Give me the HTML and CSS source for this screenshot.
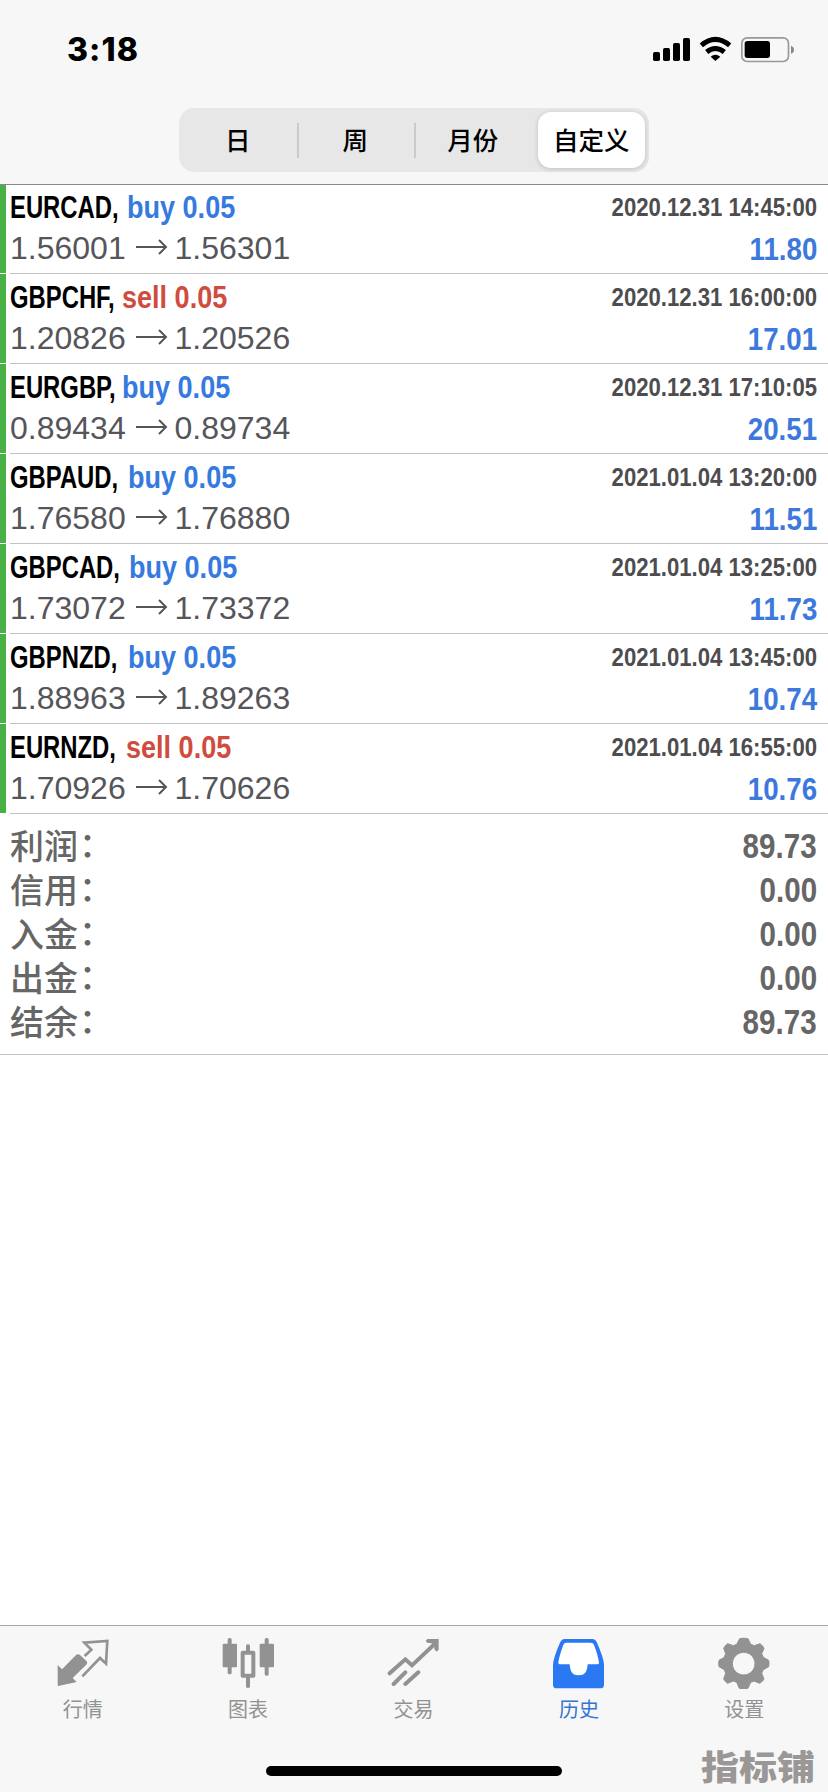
FILE: index.html
```html
<!DOCTYPE html>
<html lang="zh-CN">
<head>
<meta charset="utf-8">
<title>历史</title>
<link rel="stylesheet" href="styles.css">
</head>
<body>
<div class="screen">
  <header class="header">
    <div class="status">
      <span class="clock">3:18</span>
      <svg class="status-icons" viewBox="714 108 432 81" aria-hidden="true">
        <rect x="717" y="156" width="21" height="27" rx="5"/>
        <rect x="747" y="144" width="21" height="39" rx="5"/>
        <rect x="777" y="129" width="21" height="54" rx="5"/>
        <rect x="807" y="114" width="21" height="69" rx="5"/>
        <path d="M862 136Q904 100 947 136M878 156Q904 135 931 156" fill="none" stroke="#000" stroke-width="15"/>
        <path d="M890 170Q904 158 919 170L904 183Z"/>
        <rect x="983.500" y="113.500" width="140" height="71" rx="16" fill="none" stroke="#999" stroke-width="5"/>
        <rect x="992" y="123" width="76" height="51" rx="8"/>
        <path d="M1131 137Q1140 140 1140 149Q1140 158 1131 161Z" fill="#888"/>
      </svg>
    </div>
    <nav class="segments">
      <span class="segment">日</span>
      <span class="segment divided">周</span>
      <span class="segment divided">月份</span>
      <span class="segment selected"><span class="pill">自定义</span></span>
    </nav>
  </header>

  <main class="content">
    <section class="deals">
      <article class="deal">
        <div class="line top"><span class="symbol" style="width:117px">EURCAD,</span><span class="side buy">buy 0.05</span><time>2020.12.31 14:45:00</time></div>
        <div class="line bottom"><span class="price">1.56001</span><svg class="arrow" viewBox="0 0 32 16"><path d="M0 8H30M23 1L30 8L23 15"/></svg><span class="price">1.56301</span><span class="profit">11.80</span></div>
      </article>
      <article class="deal">
        <div class="line top"><span class="symbol" style="width:112px">GBPCHF,</span><span class="side sell">sell 0.05</span><time>2020.12.31 16:00:00</time></div>
        <div class="line bottom"><span class="price">1.20826</span><svg class="arrow" viewBox="0 0 32 16"><path d="M0 8H30M23 1L30 8L23 15"/></svg><span class="price">1.20526</span><span class="profit">17.01</span></div>
      </article>
      <article class="deal">
        <div class="line top"><span class="symbol" style="width:112px">EURGBP,</span><span class="side buy">buy 0.05</span><time>2020.12.31 17:10:05</time></div>
        <div class="line bottom"><span class="price">0.89434</span><svg class="arrow" viewBox="0 0 32 16"><path d="M0 8H30M23 1L30 8L23 15"/></svg><span class="price">0.89734</span><span class="profit">20.51</span></div>
      </article>
      <article class="deal">
        <div class="line top"><span class="symbol" style="width:118px">GBPAUD,</span><span class="side buy">buy 0.05</span><time>2021.01.04 13:20:00</time></div>
        <div class="line bottom"><span class="price">1.76580</span><svg class="arrow" viewBox="0 0 32 16"><path d="M0 8H30M23 1L30 8L23 15"/></svg><span class="price">1.76880</span><span class="profit">11.51</span></div>
      </article>
      <article class="deal">
        <div class="line top"><span class="symbol" style="width:119px">GBPCAD,</span><span class="side buy">buy 0.05</span><time>2021.01.04 13:25:00</time></div>
        <div class="line bottom"><span class="price">1.73072</span><svg class="arrow" viewBox="0 0 32 16"><path d="M0 8H30M23 1L30 8L23 15"/></svg><span class="price">1.73372</span><span class="profit">11.73</span></div>
      </article>
      <article class="deal">
        <div class="line top"><span class="symbol" style="width:118px">GBPNZD,</span><span class="side buy">buy 0.05</span><time>2021.01.04 13:45:00</time></div>
        <div class="line bottom"><span class="price">1.88963</span><svg class="arrow" viewBox="0 0 32 16"><path d="M0 8H30M23 1L30 8L23 15"/></svg><span class="price">1.89263</span><span class="profit">10.74</span></div>
      </article>
      <article class="deal">
        <div class="line top"><span class="symbol" style="width:116px">EURNZD,</span><span class="side sell">sell 0.05</span><time>2021.01.04 16:55:00</time></div>
        <div class="line bottom"><span class="price">1.70926</span><svg class="arrow" viewBox="0 0 32 16"><path d="M0 8H30M23 1L30 8L23 15"/></svg><span class="price">1.70626</span><span class="profit">10.76</span></div>
      </article>
    </section>
    <dl class="summary">
      <div class="total"><dt>利润<span class="colon">：</span></dt><dd>89.73</dd></div>
      <div class="total"><dt>信用<span class="colon">：</span></dt><dd>0.00</dd></div>
      <div class="total"><dt>入金<span class="colon">：</span></dt><dd>0.00</dd></div>
      <div class="total"><dt>出金<span class="colon">：</span></dt><dd>0.00</dd></div>
      <div class="total"><dt>结余<span class="colon">：</span></dt><dd>89.73</dd></div>
    </dl>
  </main>

  <footer class="footer">
    <nav class="tabs">
      <a class="tab">
        <svg class="icon" viewBox="169 81 156 156"><path d="M171 165L184 178L226 135Q232 130 238 135L258 154Q262 159 257 164L216 204L228 216L173 228Q171 228 171 224Z"/><path d="M252 138L272 119L251 98L320 93L316 161L298 144L245 199" fill="none" stroke="currentColor" stroke-width="8"/></svg>
        <span>行情</span>
      </a>
      <a class="tab">
        <svg class="icon" viewBox="667 81 156 156"><rect x="669" y="101" width="43" height="71" rx="4"/><rect x="684" y="84" width="12" height="109" rx="5"/><rect x="780" y="101" width="43" height="71" rx="4"/><rect x="795" y="84" width="12" height="113" rx="5"/><rect x="739" y="103" width="12" height="24" rx="5"/><rect x="739" y="198" width="12" height="36" rx="5"/><rect x="729" y="128" width="32" height="69" fill="none" stroke="currentColor" stroke-width="12" stroke-linejoin="round"/></svg>
        <span>图表</span>
      </a>
      <a class="tab">
        <svg class="icon" viewBox="352 81 156 156"><path d="M360 190L407 148L427 166L498 99M372 222L407 187M407 222L446 187" fill="none" stroke="currentColor" stroke-width="12" stroke-linecap="round" stroke-linejoin="miter"/><path d="M473 87H507V119L501 125L494 118V108L484 99H474L468 93Z"/></svg>
        <span>交易</span>
      </a>
      <a class="tab active">
        <svg class="icon" viewBox="69 81 156 156"><path d="M103 87H187Q196 87 200 96Q221 143 222 164V224Q222 235 211 235H80Q69 235 69 224V164Q70 143 91 96Q95 87 103 87Z"/><path d="M109 98H182Q190 98 192 105Q204 136 207 158Q207 163 202 163H173C171 181 169 196 146 196S121 181 119 163H90Q85 163 85 158Q88 136 100 105Q102 98 109 98Z" fill="#fff"/></svg>
        <span>历史</span>
      </a>
      <a class="tab">
        <svg class="icon" viewBox="566 81 156 156"><path fill-rule="evenodd" stroke="currentColor" stroke-width="3" stroke-linejoin="round" d="M631 86Q643 83 656 86L664 103L675 107L692 101Q700 106 704 115L697 131L702 142L718 151Q720 160 718 170L702 179L697 190L704 207Q700 215 691 220L674 213L664 217L656 235Q643 237 630 235L622 217L612 213L595 220Q587 215 583 207L589 190L585 179L569 170Q567 160 569 151L585 142L589 131L583 115Q587 106 595 101L612 107L622 103ZM643 127A34 34 0 1 0 643.100 127Z"/></svg>
        <span>设置</span>
      </a>
    </nav>
    <div class="home-indicator"></div>
    <span class="watermark">指标铺</span>
  </footer>
</div>
</body>
</html>
```
FILE: styles.css
```css
* { box-sizing: border-box; }
body { margin: 0; background: #fff; }

.screen {
  display: flex;
  flex-direction: column;
  width: 828px;
  height: 1792px;
  font-family: "Liberation Sans", "Noto Sans CJK SC", sans-serif;
  white-space: nowrap;
  overflow: hidden;
}

.header {
  height: 185px;
  flex: none;
  background: #f7f7f7;
  border-bottom: 1px solid #888;
}
.status {
  display: flex;
  justify-content: space-between;
  height: 108px;
  padding: 36px 32px 0 67px;
}
.clock { font: 800 32px/28px Inter, sans-serif; letter-spacing: 1.1px; }
.status-icons { width: 144px; height: 27px; }

.segments {
  display: grid;
  grid-template-columns: repeat(4, 1fr);
  width: 470px;
  height: 64px;
  margin-left: 179px;
  border-radius: 15px;
  background: #e7e7e8;
  font: 500 25.500px/61px "Noto Sans CJK SC", sans-serif;
  text-align: center;
}
.divided {
  background: linear-gradient(#cacacd, #cacacd) left center / 2px 35px no-repeat;
}
.selected { padding: 4px 4px 4px 6px; }
.pill {
  display: block;
  height: 56px;
  border-radius: 13px;
  background: #fff;
  line-height: 53px;
  box-shadow: 0 1px 5px rgba(0, 0, 0, .18);
}

.content { flex: 1; }
.deal {
  height: 90px;
  padding: 0 11px 0 10px;
  background:
    linear-gradient(#47b145, #47b145) 0 0 / 6px calc(100% - 1px) no-repeat,
    linear-gradient(#c2c2c4, #c2c2c4) 10px 100% / 100% 1px no-repeat;
}
.deal:first-child { height: 89px; }
.deal:first-child .top { height: 41px; padding-top: 3px; }
.line { display: flex; align-items: baseline; }
.top { height: 42px; padding-top: 4px; line-height: 38px; font-size: 32px; font-weight: 700; }
.symbol, .side { flex: none; transform-origin: left; }
.symbol { transform: scaleX(.745); color: #000; }
.side { transform: scaleX(.845); }
.buy { color: #367ae0; }
.sell { color: #cf4c3e; }
time {
  margin-left: auto;
  font-size: 26.500px;
  color: #4d4d4f;
  transform: translateY(-2px) scaleX(.835);
  transform-origin: right;
}
.bottom { line-height: 44px; font-size: 32px; color: #55555a; }
.price { width: 125.500px; }
.arrow {
  width: 32px;
  height: 16px;
  margin-right: 7px;
  transform: translateY(-4px);
  fill: none;
  stroke: #55555a;
  stroke-width: 2;
}
.profit {
  margin-left: auto;
  font-size: 32px;
  font-weight: 700;
  color: #3d78dc;
  transform: translateY(1px) scaleX(.865);
  transform-origin: right;
}

.summary {
  height: 241px;
  margin: 0;
  padding: 9px 11px 0 10px;
  border-bottom: 1px solid #c2c2c4;
  color: #666;
}
.total { display: flex; justify-content: space-between; height: 44px; }
dt { font: 500 34px/44px "Noto Sans CJK SC", sans-serif; }
.colon { display: inline-block; transform: translate(1px, -2px); }
dd {
  margin: 0;
  font-size: 35px;
  line-height: 45px;
  font-weight: 700;
  transform: scaleX(.845);
  transform-origin: right;
}

.footer {
  position: relative;
  height: 167px;
  flex: none;
  border-top: 1px solid #a9a9aa;
  background: #f7f7f7;
}
.tabs { display: grid; grid-template-columns: repeat(5, 1fr); padding: 11px 1px 0 0; }
.tab {
  display: flex;
  flex-direction: column;
  align-items: center;
  gap: 6px;
  color: #929292;
  font: 400 20px/28px "Noto Sans CJK SC", sans-serif;
}
.active { color: #2b78f3; }
.active span { color: #3475d0; }
.icon { width: 52px; height: 52px; fill: currentColor; }
.home-indicator {
  width: 296px;
  height: 10px;
  margin: 43px auto 0;
  border-radius: 5px;
  background: #000;
}
.watermark {
  position: absolute;
  right: 13px;
  bottom: 4px;
  font: 900 38px/44px "Noto Sans CJK SC", sans-serif;
  color: #9a9796;
  transform: scaleY(.9);
}
```
